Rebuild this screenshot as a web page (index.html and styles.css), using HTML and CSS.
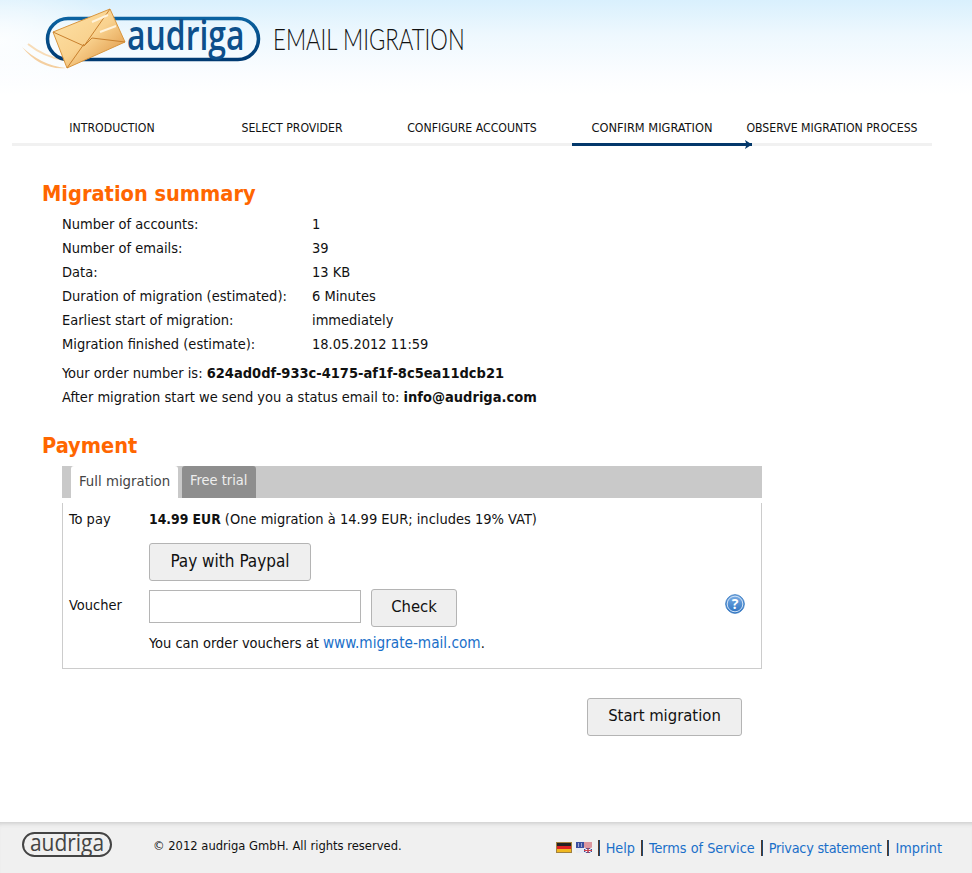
FILE: index.html
```html
<!DOCTYPE html>
<html lang="en">
<head>
<meta charset="utf-8">
<title>audriga Email Migration</title>
<link rel="stylesheet" href="styles.css">
</head>
<body>
<div class="page">
  <header class="top">
    <svg class="logo" width="273" height="80" viewBox="0 0 273 80">
      <defs>
        <linearGradient id="pill" x1="0" y1="0" x2="0" y2="1"><stop offset="0" stop-color="#0b62a0"/><stop offset="1" stop-color="#003a72"/></linearGradient>
        <linearGradient id="env" x1="0" y1="0" x2="1" y2="1"><stop offset="0" stop-color="#fde3a8"/><stop offset=".5" stop-color="#f9d28f"/><stop offset="1" stop-color="#d98a35"/></linearGradient>
      </defs>
      <path d="M22 47C34 58 48 66 66 68C50 70 34 62 22 47Z" fill="#f4cfa0"/>
      <path d="M28 44C38 52 50 58 64 60" stroke="#f7dcb8" stroke-width="2" fill="none"/>
      <rect x="47.500" y="18.500" width="211" height="41" rx="20.500" fill="none" stroke="url(#pill)" stroke-width="3.500"/>
      <polygon points="110,9 125,42 67,68 53,32" fill="url(#env)" stroke="#d9963f" stroke-width="1"/>
      <path d="M53 32L84 46L110 9M67 68L84 44M84 46L92 38L125 42" fill="none" stroke="#c9812f" stroke-width="1"/>
      <path d="M92 22L108 15M100 32L116 26" stroke="#fff3dc" stroke-width="2" fill="none"/>
      <text class="logo-word" transform="translate(127 50) scale(.76 1)" fill="#0d4f8b">audriga</text>
    </svg>
    <span class="title">EMAIL MIGRATION</span>
  </header>

  <nav class="steps">
    <span class="step">INTRODUCTION</span>
    <span class="step">SELECT PROVIDER</span>
    <span class="step">CONFIGURE ACCOUNTS</span>
    <span class="step step-active">CONFIRM MIGRATION
      <i class="bar"></i>
      <svg class="arrow" width="8" height="9" viewBox="0 0 8 9"><path d="M1 0L8 4.500L1 9L2 6H0V3H2Z" fill="#03386b"/></svg>
    </span>
    <span class="step">OBSERVE MIGRATION PROCESS</span>
  </nav>

  <main class="content">
    <h1 class="heading">Migration summary</h1>
    <dl class="summary">
      <dt>Number of accounts:</dt><dd>1</dd>
      <dt>Number of emails:</dt><dd>39</dd>
      <dt>Data:</dt><dd>13 KB</dd>
      <dt>Duration of migration (estimated):</dt><dd>6 Minutes</dd>
      <dt>Earliest start of migration:</dt><dd>immediately</dd>
      <dt>Migration finished (estimate):</dt><dd>18.05.2012 11:59</dd>
    </dl>
    <div class="order">
      <p>Your order number is: <b>624ad0df-933c-4175-af1f-8c5ea11dcb21</b></p>
      <p>After migration start we send you a status email to: <b>info@audriga.com</b></p>
    </div>

    <h1 class="heading heading-pay">Payment</h1>
    <section class="payment">
      <div class="tabs">
        <span class="tab tab-on">Full migration</span>
        <span class="tab tab-off">Free trial</span>
      </div>
      <div class="panel">
        <span class="label">To pay</span>
        <span class="price"><b>14.99 EUR</b> (One migration à 14.99 EUR; includes 19% VAT)</span>
        <span></span>
        <div><button class="btn btn-paypal" type="button">Pay with Paypal</button></div>
        <span class="label label-voucher">Voucher</span>
        <div class="voucher">
          <input class="field" type="text">
          <button class="btn btn-check" type="button">Check</button>
          <svg class="help" width="20" height="20" viewBox="0 0 20 20">
            <defs><linearGradient id="hlp" x1="0" y1="0" x2="0" y2="1"><stop offset="0" stop-color="#7fb0e6"/><stop offset="1" stop-color="#2a70c0"/></linearGradient></defs>
            <circle cx="10" cy="10" r="9.300" fill="url(#hlp)" stroke="#3f7fc4"/>
            <circle cx="10" cy="10" r="7.800" fill="none" stroke="#cfe2f6" stroke-width="1"/>
            <text class="help-mark" x="10" y="14.500" text-anchor="middle">?</text>
          </svg>
        </div>
        <span></span>
        <span class="note">You can order vouchers at <a class="note-link" href="#">www.migrate-mail.com</a>.</span>
      </div>
    </section>
    <div class="actions"><button class="btn btn-start" type="button">Start migration</button></div>
  </main>

  <footer class="foot">
    <div class="foot-left">
      <svg class="foot-logo" width="92" height="28" viewBox="0 0 92 28">
        <rect x="2" y="2" width="88" height="23" rx="11.500" fill="none" stroke="#444" stroke-width="2"/>
        <text class="foot-word" transform="translate(9 20) scale(.91 1)">audriga</text>
      </svg>
      <span class="copy">© 2012 audriga GmbH. All rights reserved.</span>
    </div>
    <div class="foot-right">
      <svg class="flag" width="16" height="11" viewBox="0 0 16 11"><rect width="16" height="11" fill="#a08040"/><rect x="1" y="1" width="14" height="3" fill="#222"/><rect x="1" y="4" width="14" height="3" fill="#d22"/><rect x="1" y="7" width="14" height="3" fill="#f0b820"/></svg>
      <svg class="flag" width="16" height="11" viewBox="0 0 16 11"><rect width="16" height="11" fill="#e8ebf4"/><path d="M0 1H16M0 3H16M0 5H16" stroke="#d2444c" stroke-width="1"/><rect width="8" height="6" fill="#3a4fa0"/><path d="M2 2H3M5 2H6M2 4H3M5 4H6" stroke="#fff"/><rect x="8" y="6" width="8" height="5" fill="#2a3f90"/><path d="M8 6L16 11M16 6L8 11" stroke="#fff" stroke-width="1.200"/><path d="M12 6V11M8 8.500H16" stroke="#d2444c" stroke-width="1.200"/></svg>
      <i class="sep"></i><a href="#">Help</a>
      <i class="sep"></i><a href="#">Terms of Service</a>
      <i class="sep"></i><a class="tight" href="#">Privacy statement</a>
      <i class="sep"></i><a href="#">Imprint</a>
    </div>
  </footer>
</div>
</body>
</html>
```
FILE: styles.css
```css
* { box-sizing: border-box; }
html, body { margin: 0; padding: 0; }
body {
  font-family: "DejaVu Sans Condensed", "DejaVu Sans", sans-serif;
  font-size: 14.500px;
  color: #111;
  background: #fff;
}
.page {
  height: 873px;
  display: flex;
  flex-direction: column;
  overflow: hidden;
}
.top {
  height: 112px;
  padding-bottom: 32px;
  display: flex;
  align-items: flex-start;
  background:
    radial-gradient(ellipse 120px 60px at 0 40px, rgba(255,255,255,.8), rgba(255,255,255,0)),
    linear-gradient(180deg, #d9f0fd 0, #eef8fe 35px, #fbfdff 75px, #fff 95px);
}
.logo { flex: none; display: block; }
.logo-word { font: 600 42px "Open Sans", sans-serif; }
.title {
  margin-top: 20px;
  font: 300 30px/36px "Lato", sans-serif;
  color: #111;
  white-space: nowrap;
  transform: scaleX(.74);
  transform-origin: left center;
}
.steps {
  margin: 0 40px 0 12px;
  padding-left: 10px;
  display: flex;
  height: 34px;
  border-bottom: 3px solid #f1f1f1;
}
.step {
  width: 180px;
  flex: none;
  text-align: center;
  font-size: 12.200px;
  line-height: 32px;
  white-space: nowrap;
  position: relative;
}
.step-active { font-size: 12.700px; }
.bar {
  position: absolute;
  left: 10px;
  right: -10px;
  top: 31px;
  height: 3px;
  background: #03386b;
}
.arrow { position: absolute; right: -10px; top: 28px; }
.content { padding: 0 0 0 42px; flex: 1; }
.heading {
  margin: 0;
  padding-top: 33px;
  font-size: 21.600px;
  line-height: 30px;
  font-weight: 700;
  color: #ff6600;
}
.heading-pay { padding-top: 22px; height: 57px; }
.summary {
  margin: 0 0 0 20px;
  padding-top: 3px;
  display: grid;
  grid-template-columns: 250px 1fr;
  grid-auto-rows: 24px;
  line-height: 24px;
}
.summary dt, .summary dd { margin: 0; }
.order { margin: 5px 0 0 20px; line-height: 24px; }
.order p { margin: 0; }
.payment { margin-left: 20px; width: 700px; }
.tabs {
  height: 32px;
  background: #c9c9c9;
  display: flex;
  padding-left: 9px;
  gap: 4px;
}
.tab { padding: 0 0 0 8px; line-height: 29px; border-radius: 3px 3px 0 0; white-space: nowrap; }
.tab-on { background: #fff; color: #444; width: 107px; font-size: 14.800px; }
.tab-off { background: #8e8e8e; color: #eee; width: 74px; }
.panel {
  margin-top: 5px;
  height: 166px;
  border: 1px solid #ccc;
  border-top: 0;
  padding: 4px 0 0 6px;
  display: grid;
  grid-template-columns: 80px 1fr;
  grid-template-rows: 24px 58px 38px 34px;
  align-items: start;
}
.label, .price, .note { line-height: 24px; }
.price b { font-size: 13.800px; }
.label-voucher { margin-top: 4px; }
.voucher { display: flex; align-items: flex-start; position: relative; }
.btn {
  font: 400 16.500px/34px "DejaVu Sans Condensed", sans-serif;
  color: #111;
  background: #efefef;
  border: 1px solid #b4b4b4;
  border-radius: 3px;
  height: 38px;
  padding: 0 0 2px;
}
.btn-paypal { width: 162px; margin-top: 12px; display: block; font-size: 17px; }
.field { width: 212px; height: 33px; border: 1px solid #b5b5b5; margin: 1px 10px 0 0; }
.btn-check { width: 86px; }
.help { position: absolute; left: 576px; top: 5px; }
.help-mark { font: 700 14px "Open Sans", sans-serif; fill: #fff; }
.note { margin-top: 4px; }
.note-link { font-size: 15.200px; }
a { color: #1a6fc9; text-decoration: none; }
.actions { width: 700px; display: flex; justify-content: flex-end; padding-top: 29px; }
.btn-start { width: 155px; }
.foot {
  height: 51px;
  flex: none;
  background: #f0f0f0;
  box-shadow: inset 0 5px 5px -4px #c4c4c4;
  display: flex;
  justify-content: space-between;
  padding: 0 30px 0 21px;
}
.foot-left { display: flex; align-items: flex-start; padding-top: 9px; }
.foot-logo { display: block; flex: none; }
.foot-word { font: 400 23px "Open Sans", sans-serif; fill: #444; }
.copy { margin-left: 40px; line-height: 30px; font-size: 12.850px; }
.foot-right { display: flex; align-items: center; font-size: 14.300px; }
.tight { letter-spacing: -.24px; }
.flag { margin-right: 4px; }
.sep {
  display: block;
  width: 2px;
  height: 16px;
  background: linear-gradient(90deg, #5a3a28 50%, #1c4a78 50%);
  margin: 0 6px 0 2px;
}
.foot-right a + .sep { margin-left: 6px; }
```
